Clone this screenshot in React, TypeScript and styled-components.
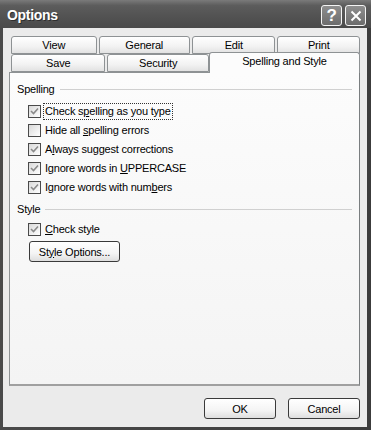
import * as React from 'react';
import styled, { createGlobalStyle } from 'styled-components';

const GlobalStyle = createGlobalStyle`
	html, body {
		margin: 0;
		padding: 0;
		background: #3a3a3a;
	}
	body {
		font-family: "Liberation Sans", Arial, sans-serif;
		font-size: 11px;
		letter-spacing: -0.2px;
		color: #000;
	}
`;

const SWindow = styled.div`
	width: 371px;
	height: 430px;
	display: flex;
	flex-direction: column;
	background: linear-gradient(90deg, #4a4a4a 0%, #3c3c3c 100%);
	box-sizing: border-box;
	overflow: hidden;
`;

const STitleBar = styled.div`
	height: 28px;
	flex: none;
	display: flex;
	align-items: flex-start;
	padding: 0 5px 0 7px;
	background: linear-gradient(180deg, #7a7a7a 0%, #5c5c5c 20%, #525252 60%, #4a4a4a 100%);
`;

const STitle = styled.div`
	flex: 1;
	color: #fff;
	font-family: "Liberation Sans", Arial, sans-serif;
	font-weight: bold;
	font-size: 14px;
	letter-spacing: -0.3px;
	text-shadow: 1px 1px 0 #2e2e2e;
	padding-top: 7px;
`;

const STitleButton = styled.div`
	box-sizing: border-box;
	width: 21px;
	height: 21px;
	margin-left: 3px;
	margin-top: 5px;
	border: 1px solid #f4f4f4;
	border-radius: 3px;
	background: linear-gradient(180deg, #8e8e8e 0%, #6c6c6c 100%);
	display: flex;
	align-items: center;
	justify-content: center;
	color: #fff;
	font-weight: bold;
	font-size: 17px;
`;

const SBody = styled.div`
	flex: 1;
	margin: 0 4px 3px 3px;
	background: #ebebeb;
	padding: 8px 7px 8px 6px;
	display: flex;
	flex-direction: column;
`;

const STabStrip = styled.div`
	display: flex;
	flex-direction: column;
	padding-left: 2px;
	position: relative;
	z-index: 1;
`;

const STabRow = styled.div`
	display: flex;
	align-items: flex-end;
	height: 18px;
	gap: 2px;
`;

interface ITabProps {
	w: number;
	selected?: boolean;
}

const STab = styled.div<ITabProps>`
	box-sizing: border-box;
	width: ${(p) => p.w}px;
	height: ${(p) => (p.selected ? 21 : 18)}px;
	margin: ${(p) => (p.selected ? '0 0 -1px -2px' : '0')};
	border: 1px solid #8e9294;
	border-bottom: ${(p) => (p.selected ? 'none' : '1px solid #8e9294')};
	border-radius: 3px 3px 0 0;
	background: ${(p) =>
		p.selected
			? '#fcfcfc'
			: 'linear-gradient(180deg, #ffffff 0%, #f2f2f2 60%, #e2e2e2 100%)'};
	display: flex;
	justify-content: center;
	padding-top: 2px;
	line-height: 13px;
`;

const SPanel = styled.div`
	height: 314px;
	box-sizing: border-box;
	border: 1px solid #8e9294;
	border-right-color: #7a7e80;
	border-bottom: 2px solid #a0a0a0;
	background: linear-gradient(180deg, #fcfcfc 0%, #f4f4f4 100%);
	padding: 9px 7px 0 7px;
	display: flex;
	flex-direction: column;
`;

const SGroupHeader = styled.div<{ gap: number }>`
	display: flex;
	align-items: center;
	height: 14px;
	margin-top: ${(p) => p.gap}px;
	&::after {
		content: '';
		flex: 1;
		height: 1px;
		margin-left: 5px;
		background: #d0d0d0;
	}
`;

const SList = styled.div<{ gap: number }>`
	display: flex;
	flex-direction: column;
	margin-top: ${(p) => p.gap}px;
	padding-left: 11px;
`;

const SRow = styled.label`
	display: flex;
	align-items: center;
	height: 19px;
`;

const SBox = styled.span`
	box-sizing: border-box;
	width: 13px;
	height: 13px;
	border: 1px solid #4a4a4a;
	background: linear-gradient(135deg, #d8d8d8 0%, #f0f0f0 60%, #ffffff 100%);
	display: flex;
	align-items: center;
	justify-content: center;
	flex: none;
`;

const SLabel = styled.span<{ focused?: boolean }>`
	margin-left: 2px;
	padding: 1px 1px 2px 1px;
	border: 1px dotted ${(p) => (p.focused ? '#333' : 'transparent')};
	white-space: nowrap;
`;

const SButton = styled.div<{ w: number }>`
	box-sizing: border-box;
	width: ${(p) => p.w}px;
	height: 21px;
	border: 1px solid #3a3a3a;
	border-radius: 3px;
	background: linear-gradient(180deg, #ffffff 0%, #f4f4f4 60%, #dedede 100%);
	display: flex;
	align-items: center;
	justify-content: center;
	flex: none;
`;

const SStyleButtonWrap = styled.div`
	margin-top: 2px;
	padding-left: 12px;
`;

const SFooter = styled.div`
	display: flex;
	justify-content: flex-end;
	gap: 12px;
	margin-top: 12px;
`;

const Check = () => (
	<svg width='9' height='9' viewBox='0 0 9 9'>
		<path d='M1 4 L3.5 6.5 L8 1.5' fill='none' stroke='#8a8a8a' strokeWidth='1.6' />
	</svg>
);

const Acc = ({ children }: { children: React.ReactNode }) => <u>{children}</u>;

interface IOption {
	label: React.ReactNode;
	checked: boolean;
	focused?: boolean;
}

const spelling: IOption[] = [
	{ label: <>Check s<Acc>p</Acc>elling as you type</>, checked: true, focused: true },
	{ label: <>Hide all <Acc>s</Acc>pelling errors</>, checked: false },
	{ label: <>A<Acc>l</Acc>ways suggest corrections</>, checked: true },
	{ label: <>Ignore words in <Acc>U</Acc>PPERCASE</>, checked: true },
	{ label: <>Ignore words with num<Acc>b</Acc>ers</>, checked: true },
];

const Option = ({ opt }: { opt: IOption }) => (
	<SRow>
		<SBox>{opt.checked && <Check />}</SBox>
		<SLabel focused={opt.focused}>{opt.label}</SLabel>
	</SRow>
);

export default function App() {
	return (
		<>
			<GlobalStyle />
			<SWindow>
				<STitleBar>
					<STitle>Options</STitle>
					<STitleButton>?</STitleButton>
					<STitleButton>
						<svg width='12' height='12' viewBox='0 0 12 12'>
							<path d='M1.5 1.5 L10.5 10.5 M10.5 1.5 L1.5 10.5' stroke='#fff' strokeWidth='2' />
						</svg>
					</STitleButton>
				</STitleBar>
				<SBody>
					<STabStrip>
						<STabRow>
							<STab w={86}>View</STab>
							<STab w={92}>General</STab>
							<STab w={84}>Edit</STab>
							<STab w={83}>Print</STab>
						</STabRow>
						<STabRow>
							<STab w={95}>Save</STab>
							<STab w={102}>Security</STab>
							<STab w={152} selected>
								Spelling and Style
							</STab>
						</STabRow>
					</STabStrip>
					<SPanel>
						<SGroupHeader gap={0}>Spelling</SGroupHeader>
						<SList gap={6}>
							{spelling.map((o, i) => (
								<Option key={i} opt={o} />
							))}
						</SList>
						<SGroupHeader gap={5}>Style</SGroupHeader>
						<SList gap={4}>
							<Option opt={{ label: <><Acc>C</Acc>heck style</>, checked: true }} />
						</SList>
						<SStyleButtonWrap>
							<SButton w={91}>
								<span>
									St<Acc>y</Acc>le Options...
								</span>
							</SButton>
						</SStyleButtonWrap>
					</SPanel>
					<SFooter>
						<SButton w={72}>OK</SButton>
						<SButton w={72}>Cancel</SButton>
					</SFooter>
				</SBody>
			</SWindow>
		</>
	);
}
